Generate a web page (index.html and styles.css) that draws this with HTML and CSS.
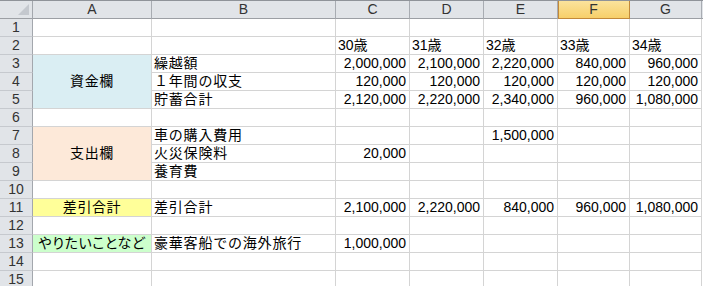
FILE: index.html
```html
<!DOCTYPE html>
<html lang="ja">

<head>
    <meta charset="UTF-8">
    <meta name="viewport" content="width=device-width, initial-scale=1.0">
    <link rel="stylesheet" href="styles.css">
</head>

<body>
    <div class="sheet">
        <!-- column headers -->
        <div class="corner"><span class="select-all"></span></div>
        <div class="col-head">A</div>
        <div class="col-head">B</div>
        <div class="col-head">C</div>
        <div class="col-head">D</div>
        <div class="col-head">E</div>
        <div class="col-head active">F</div>
        <div class="col-head">G</div>
        <div class="col-head filler"></div>

        <!-- 1 -->
        <div class="row-head">1</div>
        <div class="cell"></div><div class="cell"></div><div class="cell"></div><div class="cell"></div>
        <div class="cell"></div><div class="cell"></div><div class="cell"></div>

        <!-- 2 -->
        <div class="row-head">2</div>
        <div class="cell"></div><div class="cell"></div>
        <div class="cell">30歳</div>
        <div class="cell">31歳</div>
        <div class="cell">32歳</div>
        <div class="cell">33歳</div>
        <div class="cell">34歳</div>

        <!-- 3 -->
        <div class="row-head">3</div>
        <div class="cell label span-3 fund">資金欄</div>
        <div class="cell item">繰越額</div>
        <div class="cell num">2,000,000</div>
        <div class="cell num">2,100,000</div>
        <div class="cell num">2,220,000</div>
        <div class="cell num">840,000</div>
        <div class="cell num">960,000</div>

        <!-- 4 -->
        <div class="row-head">4</div>
        <div class="cell item">１年間の収支</div>
        <div class="cell num">120,000</div>
        <div class="cell num">120,000</div>
        <div class="cell num">120,000</div>
        <div class="cell num">120,000</div>
        <div class="cell num">120,000</div>

        <!-- 5 -->
        <div class="row-head">5</div>
        <div class="cell item">貯蓄合計</div>
        <div class="cell num">2,120,000</div>
        <div class="cell num">2,220,000</div>
        <div class="cell num">2,340,000</div>
        <div class="cell num">960,000</div>
        <div class="cell num">1,080,000</div>

        <!-- 6 -->
        <div class="row-head">6</div>
        <div class="cell"></div><div class="cell"></div><div class="cell"></div><div class="cell"></div>
        <div class="cell"></div><div class="cell"></div><div class="cell"></div>

        <!-- 7 -->
        <div class="row-head">7</div>
        <div class="cell label span-3 spend">支出欄</div>
        <div class="cell item">車の購入費用</div>
        <div class="cell"></div>
        <div class="cell"></div>
        <div class="cell num">1,500,000</div>
        <div class="cell"></div>
        <div class="cell"></div>

        <!-- 8 -->
        <div class="row-head">8</div>
        <div class="cell item">火災保険料</div>
        <div class="cell num">20,000</div>
        <div class="cell"></div><div class="cell"></div><div class="cell"></div><div class="cell"></div>

        <!-- 9 -->
        <div class="row-head">9</div>
        <div class="cell item">養育費</div>
        <div class="cell"></div><div class="cell"></div><div class="cell"></div><div class="cell"></div>
        <div class="cell"></div>

        <!-- 10 -->
        <div class="row-head">10</div>
        <div class="cell"></div><div class="cell"></div><div class="cell"></div><div class="cell"></div>
        <div class="cell"></div><div class="cell"></div><div class="cell"></div>

        <!-- 11 -->
        <div class="row-head">11</div>
        <div class="cell label balance">差引合計</div>
        <div class="cell item">差引合計</div>
        <div class="cell num">2,100,000</div>
        <div class="cell num">2,220,000</div>
        <div class="cell num">840,000</div>
        <div class="cell num">960,000</div>
        <div class="cell num">1,080,000</div>

        <!-- 12 -->
        <div class="row-head">12</div>
        <div class="cell"></div><div class="cell"></div><div class="cell"></div><div class="cell"></div>
        <div class="cell"></div><div class="cell"></div><div class="cell"></div>

        <!-- 13 -->
        <div class="row-head">13</div>
        <div class="cell label wish">やりたいことなど</div>
        <div class="cell item">豪華客船での海外旅行</div>
        <div class="cell num">1,000,000</div>
        <div class="cell"></div><div class="cell"></div><div class="cell"></div><div class="cell"></div>

        <!-- 14 -->
        <div class="row-head">14</div>
        <div class="cell"></div><div class="cell"></div><div class="cell"></div><div class="cell"></div>
        <div class="cell"></div><div class="cell"></div><div class="cell"></div>

        <!-- 15 -->
        <div class="row-head">15</div>
        <div class="cell"></div><div class="cell"></div><div class="cell"></div><div class="cell"></div>
        <div class="cell"></div><div class="cell"></div><div class="cell"></div>
    </div>
</body>

</html>
```

FILE: styles.css
```css
body {
    margin: 0;
    padding: 0;
    height: 286px;
    overflow: hidden;
    background: #ffffff;
}

.sheet {
    display: grid;
    grid-template-columns: 33px 119px 184px 74px 74px 74px 72px 72px 1fr;
    grid-template-rows: 18px;
    grid-auto-rows: 18px;
    border-top: 1px solid #8f9399;
    font-family: "Liberation Sans", "Noto Sans CJK JP", sans-serif;
    font-size: 14px;
    line-height: 17px;
    color: #000000;
}

.sheet > div {
    box-sizing: border-box;
    white-space: nowrap;
    overflow: hidden;
}

.corner,
.col-head,
.row-head {
    background: #e1e4e8;
    color: #333333;
    text-align: center;
}

.corner {
    position: relative;
    border-right: 1px solid #a3a7ad;
    border-bottom: 1px solid #9c9fa4;
}

.corner .select-all {
    position: absolute;
    right: 3px;
    bottom: 3px;
    width: 0;
    height: 0;
    border-left: 11px solid transparent;
    border-bottom: 11px solid #c4c8ce;
}

.col-head {
    border-right: 1px solid #a8acb2;
    border-bottom: 1px solid #9c9fa4;
}

.col-head.filler {
    border-right: none;
}

.col-head.active {
    background: linear-gradient(#fbe39c, #f7cf6a);
    border-right: 1px solid #c2893a;
    border-bottom: 1px solid #c2893a;
    box-shadow: inset 1px 0 0 #c2893a;
}

.row-head {
    grid-column: 1;
    border-right: 1px solid #a3a7ad;
    border-bottom: 1px solid #c6c9ce;
}

.cell {
    padding: 0 2px;
    border-right: 1px solid #d4d4d4;
    border-bottom: 1px solid #d4d4d4;
}

.cell.item {
    letter-spacing: 0.8px;
}

.cell.num {
    text-align: right;
    padding-right: 3px;
}

.cell.label {
    display: flex;
    align-items: center;
    justify-content: center;
    letter-spacing: 0.6px;
}

.span-3 {
    grid-row: span 3;
}

.fund {
    background: #daeef3;
}

.spend {
    background: #fde9d9;
}

.balance {
    background: #ffff99;
}

.wish {
    background: #ccffcc;
    font-feature-settings: "palt";
}
```
